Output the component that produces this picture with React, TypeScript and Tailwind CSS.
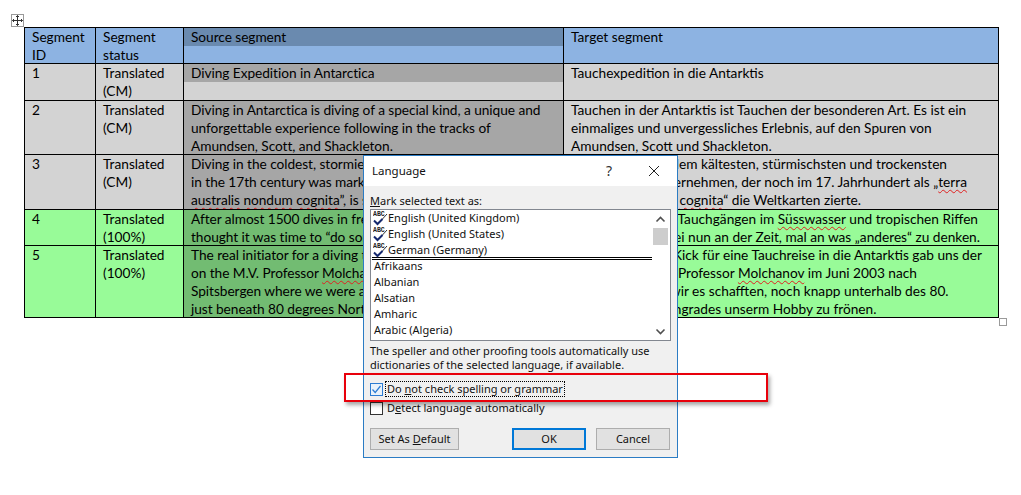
import React from "react";

const W = ({ children, blue }: { children: React.ReactNode; blue?: boolean }) => (
  <span className={blue ? "underline decoration-wavy decoration-[#2b4fd0] decoration-1 underline-offset-2" : "underline decoration-wavy decoration-[#e02020] decoration-1 underline-offset-2"}>{children}</span>
);

const Cell = ({ className = "", children }: { className?: string; children?: React.ReactNode }) => (
  <div className={"border-r border-b border-black px-[7px] overflow-hidden " + className}>{children}</div>
);

const L = ({ w, children }: { w: string; children: React.ReactNode }) => (
  <div className={"whitespace-nowrap text-right " + w}>{children}</div>
);

const Src = ({ className = "", children }: { className?: string; children: React.ReactNode }) => (
  <div className={"whitespace-nowrap pl-[7px] tracking-[-0.05px] " + className}>{children}</div>
);

const AbcIcon = () => (
  <svg width="15" height="16" viewBox="0 0 15 16" className="shrink-0">
    <text x="0" y="6" fontSize="6.5" fontFamily="'Liberation Mono', monospace" fontWeight="700" fill="#222">ABC</text>
    <path d="M9 9.5 L14 4" fill="none" stroke="#333" strokeWidth="1" />
    <path d="M1 10.5 L4.5 14 L9.5 9" fill="none" stroke="#14286e" strokeWidth="2" />
  </svg>
);

const Lang = ({ children }: { children: React.ReactNode }) => (
  <div className="h-[16px] leading-[16px] pl-[3px] whitespace-nowrap">{children}</div>
);

const Checked = ({ children }: { children: React.ReactNode }) => (
  <div className="h-[16px] leading-[16px] pl-[2px] flex items-center whitespace-nowrap">
    <AbcIcon />
    <span>{children}</span>
  </div>
);

export default function App() {
  return (
    <div className="relative w-[1021px] h-[495px] bg-white overflow-hidden pt-[27px] pl-[24px] font-['Lato',sans-serif] text-[13.7px] leading-[18px] text-black">
      {/* table move handle */}
      <div className="absolute left-[11px] top-[14px] w-[13px] h-[13px] border border-[#9a9a9a] flex items-center justify-center bg-white">
        <svg width="11" height="11" viewBox="0 0 11 11" fill="none" stroke="#333" strokeWidth="1">
          <path d="M5.5 0.5V10.5M0.5 5.5H10.5M4 2L5.5 0.5L7 2M4 9L5.5 10.5L7 9M2 4L0.5 5.5L2 7M9 4L10.5 5.5L9 7" />
        </svg>
      </div>
      {/* table resize handle */}
      <div className="absolute left-[999px] top-[318px] w-[8px] h-[8px] border border-[#9a9a9a] bg-white" />

      <div className="grid w-[975px] grid-cols-[71px_88px_380px_435px] grid-rows-[36px_37px_54px_55px_36px_72px] border-l border-t border-black">
        <Cell className="bg-[#8db3e2]">Segment<br />ID</Cell>
        <Cell className="bg-[#8db3e2]">Segment<br />status</Cell>
        <Cell className="bg-[#8db3e2] !px-0"><Src className="bg-[#6a8aaf] h-[18px]">Source segment</Src></Cell>
        <Cell className="bg-[#8db3e2]">Target segment</Cell>

        <Cell className="bg-[#d3d3d3]">1</Cell>
        <Cell className="bg-[#d3d3d3]">Translated<br />(CM)</Cell>
        <Cell className="bg-[#d3d3d3] !px-0"><Src className="bg-[#a6a6a6] h-[18px]">Diving Expedition in Antarctica</Src></Cell>
        <Cell className="bg-[#d3d3d3]">Tauchexpedition in die Antarktis</Cell>

        <Cell className="bg-[#d3d3d3]">2</Cell>
        <Cell className="bg-[#d3d3d3]">Translated<br />(CM)</Cell>
        <Cell className="bg-[#a6a6a6] tracking-[-0.05px]">
          Diving in Antarctica is diving of a special kind, a unique and<br />
          unforgettable experience following in the tracks of<br />
          Amundsen, Scott, and Shackleton.
        </Cell>
        <Cell className="bg-[#d3d3d3]">
          Tauchen in der Antarktis ist Tauchen der besonderen Art. Es ist ein<br />
          einmaliges und unvergessliches Erlebnis, auf den Spuren von<br />
          Amundsen, Scott und Shackleton.
        </Cell>

        <Cell className="bg-[#d3d3d3]">3</Cell>
        <Cell className="bg-[#d3d3d3]">Translated<br />(CM)</Cell>
        <Cell className="bg-[#a6a6a6] whitespace-nowrap tracking-[-0.05px]">
          Diving in the coldest, stormiest and driest continent, which even<br />
          in the 17th century was marked on world maps as “terra<br />
          <W>australis</W> <W>nondum</W> <W>cognita</W>”, is something special.
        </Cell>
        <Cell className="bg-[#d3d3d3]">
          <L w="w-[376px]">Das Tauchen in dem kältesten, stürmischsten und trockensten</L>
          <L w="w-[396px]">Ein Unternehmen, der noch im 17. Jahrhundert als „<W>terra</W></L>
          <L w="w-[290px]">australis nondum <W>cognita</W>“ die Weltkarten zierte.</L>
        </Cell>

        <Cell className="bg-[#98fb98]">4</Cell>
        <Cell className="bg-[#98fb98]">Translated<br />(100%)</Cell>
        <Cell className="bg-[#72bc72] whitespace-nowrap tracking-[-0.05px]">
          After almost 1500 dives in fresh water and tropical reefs we<br />
          thought it was time to “do something different”.
        </Cell>
        <Cell className="bg-[#98fb98]">
          <L w="w-[407px]">Nach fast 1500 Tauchgängen im <W>Süsswasser</W> und tropischen Riffen</L>
          <L w="w-[409px]">dachten wir, es sei nun an der Zeit, mal an was „<W blue>anderes</W>“ zu denken.</L>
        </Cell>

        <Cell className="bg-[#98fb98]">5</Cell>
        <Cell className="bg-[#98fb98]">Translated<br />(100%)</Cell>
        <Cell className="bg-[#72bc72] whitespace-nowrap tracking-[-0.05px]">
          The real initiator for a diving trip to Antarctica was given to us<br />
          on the M.V. Professor <W>Molchanov</W> in June 2003 to<br />
          Spitsbergen where we were able to pursue our hobby<br />
          just beneath 80 degrees North.
        </Cell>
        <Cell className="bg-[#98fb98]">
          <L w="w-[411px]">Den letzten Kick für eine Tauchreise in die Antarktis gab uns der</L>
          <L w="w-[346px]">Trip auf der M.V. Professor <W>Molchanov</W> im Juni 2003 nach</L>
          <L w="w-[376px]">Spitzbergen, wo wir es schafften, noch knapp unterhalb des 80.</L>
          <L w="w-[305px]">nördlichen Breitengrades unserm Hobby zu frönen.</L>
        </Cell>
      </div>

      {/* Language dialog */}
      <div className="absolute left-[363px] top-[155px] w-[315px] h-[303px] border border-[#2b7cc4] bg-[#f0f0f0] font-['Noto_Sans',sans-serif] text-[11px] text-[#111] flex flex-col">
        <div className="h-[30px] bg-white flex items-center pl-[8px] shrink-0 text-[11.5px]">
          <span>Language</span>
          <span className="ml-auto mr-[36px] text-[14px] text-[#333] leading-[16px]">?</span>
          <svg width="12" height="12" viewBox="0 0 12 12" className="mr-[17px]" fill="none" stroke="#222" strokeWidth="1"><path d="M1 1L11 11M11 1L1 11" /></svg>
        </div>
        <div className="flex flex-col px-[6px] flex-1">
          <div className="mt-[6px] h-[17px] leading-[17px]"><u>M</u>ark selected text as:</div>
          <div className="h-[132px] w-[301px] border border-[#828790] bg-white flex">
            <div className="flex-1 min-w-0">
              <div className="pr-[2px]">
                <Checked>English (United Kingdom)</Checked>
                <Checked>English (United States)</Checked>
                <Checked>German (Germany)</Checked>
              </div>
              <div className="mx-[1px] h-[3px] border-y border-black -mt-[1px]" />
              <div className="-mt-[2px]">
                <Lang>Afrikaans</Lang>
                <Lang>Albanian</Lang>
                <Lang>Alsatian</Lang>
                <Lang>Amharic</Lang>
                <Lang>Arabic (Algeria)</Lang>
              </div>
            </div>
            <div className="w-[15px] mr-[2px] flex flex-col items-center">
              <svg width="15" height="18" viewBox="0 0 15 18" fill="none" stroke="#505050" strokeWidth="1.6"><path d="M3.5 11.5L7.5 7.5L11.5 11.5" /></svg>
              <div className="w-[15px] h-[17px] bg-[#cdcdcd]" />
              <div className="flex-1" />
              <svg width="15" height="18" viewBox="0 0 15 18" fill="none" stroke="#505050" strokeWidth="1.6"><path d="M3.5 7.5L7.5 11.5L11.5 7.5" /></svg>
            </div>
          </div>
          <div className="mt-[3px] leading-[14px] whitespace-nowrap">
            The speller and other proofing tools automatically use<br />
            dictionaries of the selected language, if available.
          </div>
          <div className="mt-[9px] flex items-center h-[16px]">
            <div className="w-[13px] h-[13px] border border-[#2b7cd3] flex items-center justify-center bg-[#e8f2fb]">
              <svg width="11" height="11" viewBox="0 0 11 11" fill="none" stroke="#2b7cd3" strokeWidth="1.2"><path d="M1.5 5.5L4.2 8.5L9.5 2" /></svg>
            </div>
            <span className="ml-[2px] px-[1px] border border-dotted border-black leading-[14px] whitespace-nowrap">Do <u>n</u>ot check spelling or grammar</span>
          </div>
          <div className="mt-[3px] flex items-center h-[16px]">
            <div className="w-[13px] h-[13px] border border-[#333] bg-white" />
            <span className="ml-[4px] whitespace-nowrap">D<u>e</u>tect language automatically</span>
          </div>
          <div className="mt-[12px] flex">
            <div className="w-[89px] h-[22px] border border-[#adadad] bg-[#e1e1e1] flex items-center justify-center"><span>Set As <u>D</u>efault</span></div>
            <div className="ml-[53px] w-[74px] h-[22px] border-2 border-[#0078d7] bg-[#e1e1e1] flex items-center justify-center">OK</div>
            <div className="ml-[10px] w-[74px] h-[22px] border border-[#adadad] bg-[#e1e1e1] flex items-center justify-center">Cancel</div>
          </div>
        </div>
      </div>

      {/* Red highlight */}
      <div className="absolute left-[344px] top-[373px] w-[424px] h-[29px] border-2 border-[#e8000b] shadow-[2px_3px_4px_rgba(0,0,0,0.35)]" />
    </div>
  );
}
